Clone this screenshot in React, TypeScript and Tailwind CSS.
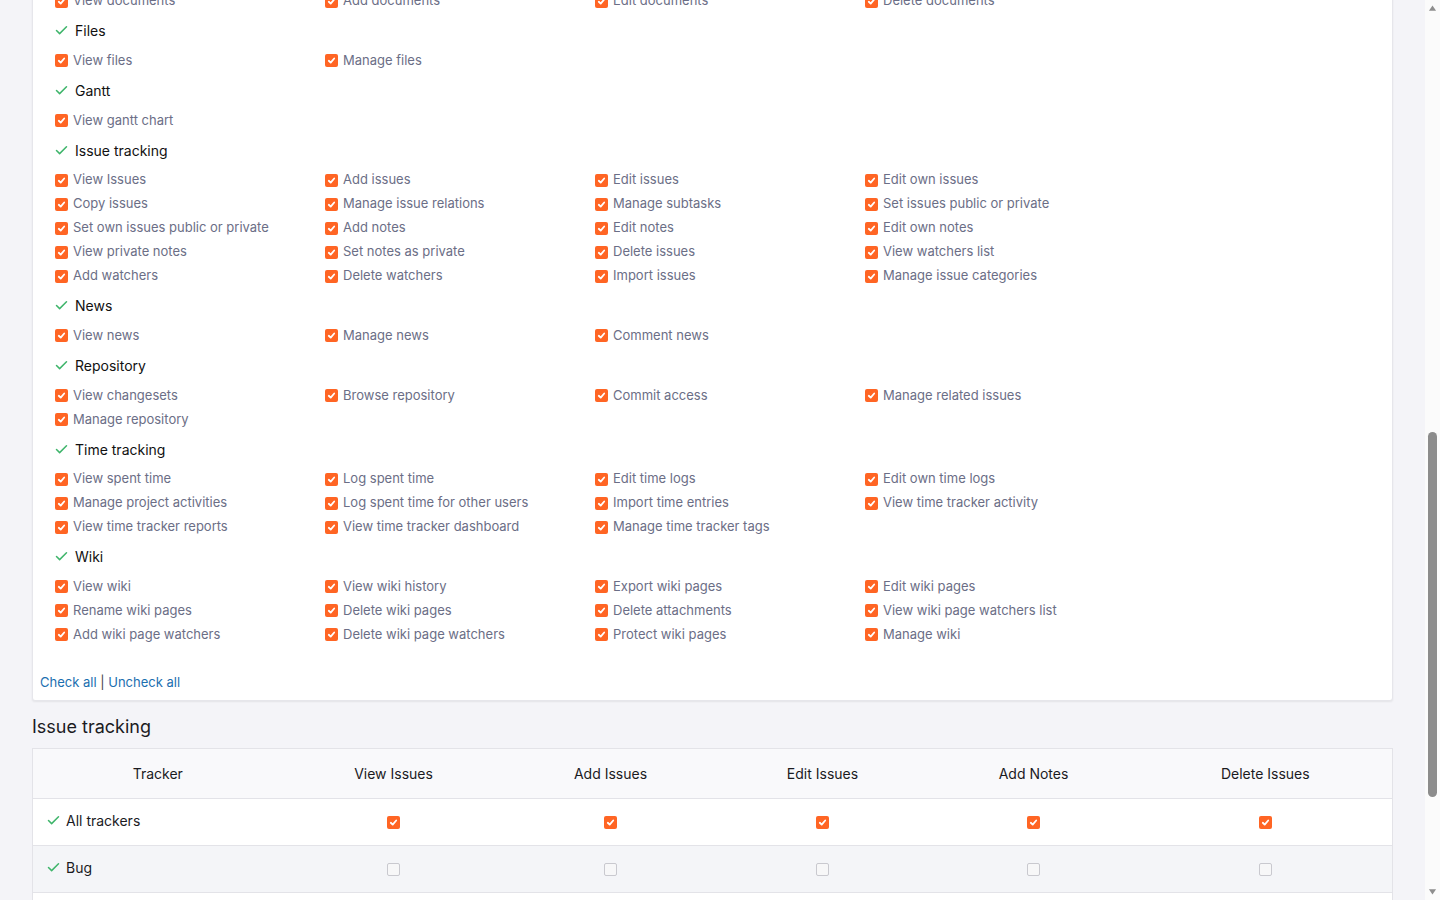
import { useLayoutEffect, useRef } from "react"
import { Check } from "lucide-react"

type Module = { name: string; perms: string[] }

const modules: Module[] = [
  {
    name: "Project",
    perms: [
      "Create project", "Edit project", "Close / reopen the project", "Delete the project",
      "Select project modules", "Manage members", "Manage versions", "Create subprojects",
      "Manage public queries", "Save queries", "View project",
    ],
  },
  { name: "Boards", perms: ["Manage forums", "Post messages", "Edit messages", "Edit own messages", "Delete messages", "Delete own messages", "View messages", "Watch messages"] },
  { name: "Calendar", perms: ["View calendar"] },
  { name: "Documents", perms: ["View documents", "Add documents", "Edit documents", "Delete documents"] },
  { name: "Files", perms: ["View files", "Manage files"] },
  { name: "Gantt", perms: ["View gantt chart"] },
  {
    name: "Issue tracking",
    perms: [
      "View Issues", "Add issues", "Edit issues", "Edit own issues",
      "Copy issues", "Manage issue relations", "Manage subtasks", "Set issues public or private",
      "Set own issues public or private", "Add notes", "Edit notes", "Edit own notes",
      "View private notes", "Set notes as private", "Delete issues", "View watchers list",
      "Add watchers", "Delete watchers", "Import issues", "Manage issue categories",
    ],
  },
  { name: "News", perms: ["View news", "Manage news", "Comment news"] },
  { name: "Repository", perms: ["View changesets", "Browse repository", "Commit access", "Manage related issues", "Manage repository"] },
  {
    name: "Time tracking",
    perms: [
      "View spent time", "Log spent time", "Edit time logs", "Edit own time logs",
      "Manage project activities", "Log spent time for other users", "Import time entries", "View time tracker activity",
      "View time tracker reports", "View time tracker dashboard", "Manage time tracker tags",
    ],
  },
  {
    name: "Wiki",
    perms: [
      "View wiki", "View wiki history", "Export wiki pages", "Edit wiki pages",
      "Rename wiki pages", "Delete wiki pages", "Delete attachments", "View wiki page watchers list",
      "Add wiki page watchers", "Delete wiki page watchers", "Protect wiki pages", "Manage wiki",
    ],
  },
]

const trackerCols = ["View Issues", "Add Issues", "Edit Issues", "Add Notes", "Delete Issues"]
const trackers = ["All trackers", "Bug", "Feature", "Support"]

function Box({ checked }: { checked: boolean }) {
  if (checked) {
    return (
      <span className="flex h-[13px] w-[13px] shrink-0 items-center justify-center rounded-[2px] bg-[#ff6524]">
        <svg viewBox="0 0 10 10" className="h-[9px] w-[9px]" fill="none" stroke="white" strokeWidth="2" strokeLinecap="round" strokeLinejoin="round">
          <path d="M2 5.3 L4.1 7.3 L8 2.8" />
        </svg>
      </span>
    )
  }
  return <span className="block h-[13px] w-[13px] shrink-0 rounded-[2px] border border-[#c9c9cf] bg-[#f7f7f8]" />
}

// browser-style scrollbar on the right edge
function Scrollbar() {
  return (
    <div className="flex h-screen w-[15px] shrink-0 flex-col items-center bg-[#fbfbfb]">
      <svg viewBox="0 0 10 10" className="mt-[4px] h-[8px] w-[9px]" fill="#8e8e8e">
        <path d="M5 2 L9.5 8.5 L0.5 8.5 Z" />
      </svg>
      <div className="mt-[420px] h-[365px] w-[9px] rounded-full bg-[#8c8c8c]" />
      <div className="flex-1" />
      <svg viewBox="0 0 10 10" className="mb-[4px] h-[8px] w-[9px]" fill="#8e8e8e">
        <path d="M0.5 1.5 L9.5 1.5 L5 8 Z" />
      </svg>
    </div>
  )
}

export default function App() {
  const scroller = useRef<HTMLDivElement>(null)
  const files = useRef<HTMLDivElement>(null)

  useLayoutEffect(() => {
    const c = scroller.current
    const t = files.current
    if (!c || !t) return
    c.scrollTop += t.getBoundingClientRect().top - 19
  }, [])

  return (
    <div className="flex h-screen bg-[#f4f4f8] text-[#1b1b1f]" style={{ fontFamily: "Inter, 'Noto Sans', sans-serif" }}>
      <div ref={scroller} className="h-screen flex-1 overflow-hidden">
        <div className="px-8 pb-10 pt-6">
          <h2 className="mb-4 text-[20px]">Roles » Manager</h2>
          <div className="mb-6 rounded-[3px] border border-[#e4e4ea] bg-white p-5 text-[13px]">
            <div className="flex items-center gap-4">
              <span className="w-[120px] text-right">Name *</span>
              <span className="h-8 w-[300px] rounded border border-[#d8d8de] px-2 leading-8">Manager</span>
            </div>
          </div>
          <h3 className="mb-[10px] text-[18px]">Permissions</h3>

          {/* Permissions card */}
          <div className="rounded-[3px] border border-[#e6e6eb] bg-white pb-[8px] pt-4 shadow-[0_1px_2px_rgba(0,0,0,0.07)]">
            <div className="flex flex-col gap-[5.7px] pl-[21px]">
              {modules.map((m) => (
                <div key={m.name} ref={m.name === "Files" ? files : undefined}>
                  <div className="flex h-6 items-center gap-[6px] text-[14px] text-[#111]">
                    <Check className="h-[15px] w-[15px] text-[#3fb56b]" strokeWidth={2.4} />
                    <span>{m.name}</span>
                  </div>
                  <div className="mt-[6px] grid grid-cols-[270px_270px_270px_270px]">
                    {m.perms.map((p) => (
                      <label key={p} className="flex h-6 items-center gap-[5px] pl-[1px] text-[13px] text-[#6b6e86]">
                        <Box checked />
                        <span>{p}</span>
                      </label>
                    ))}
                  </div>
                </div>
              ))}
            </div>
            <div className="mt-[26px] pl-[7px] text-[13px] text-[#1c6fb0]">
              <span>Check all</span>
              <span className="text-[#444]"> | </span>
              <span>Uncheck all</span>
            </div>
          </div>

          <h3 className="mt-[12px] mb-[8px] text-[18px] text-[#1b1b1f]">Issue tracking</h3>

          {/* Tracker table */}
          <table className="w-full border-collapse border border-[#e3e3e8] text-[14px]">
            <colgroup>
              <col className="w-[250px]" />
              <col className="w-[222px]" />
              <col className="w-[212px]" />
              <col className="w-[212px]" />
              <col className="w-[210px]" />
              <col />
            </colgroup>
            <thead>
              <tr className="h-[50px] bg-[#f9f9fb]">
                <th className="font-normal">Tracker</th>
                {trackerCols.map((c) => (
                  <th key={c} className="font-normal">{c}</th>
                ))}
              </tr>
            </thead>
            <tbody>
              {trackers.map((t, i) => (
                <tr key={t} className={`h-[47px] border-t border-[#e3e3e8] ${i % 2 === 1 ? "bg-[#f4f5f8]" : "bg-white"}`}>
                  <td className="pl-[13px]">
                    <div className="-mt-[4px] flex items-center gap-[5px]">
                      <Check className="h-[15px] w-[15px] text-[#3fb56b]" strokeWidth={2.4} />
                      <span>{t}</span>
                    </div>
                  </td>
                  {trackerCols.map((c) => (
                    <td key={c}>
                      <div className="flex justify-center">
                        <Box checked={i === 0} />
                      </div>
                    </td>
                  ))}
                </tr>
              ))}
            </tbody>
          </table>

          <div className="mt-6">
            <span className="inline-block rounded bg-[#ff6524] px-5 py-2 text-[14px] text-white">Save</span>
          </div>
        </div>
      </div>
      <Scrollbar />
    </div>
  )
}
